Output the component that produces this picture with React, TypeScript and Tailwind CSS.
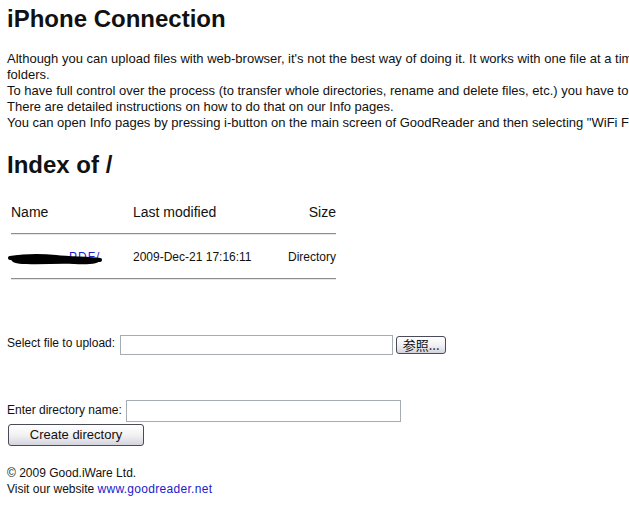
import React from "react";

export default function App() {
  return (
    <div className="w-[629px] h-[519px] overflow-hidden bg-white text-[#111] font-['Liberation_Sans',Arial,sans-serif]">
      <div className="w-[1000px] px-[7px]">
        <h1 className="mt-[5px] text-[24px] leading-[28px] font-bold">iPhone Connection</h1>
        <div className="mt-[18px] text-[13px] leading-[16px] whitespace-nowrap">
          <div>Although you can upload files with web-browser, it's not the best way of doing it. It works with one file at a time and you cannot upload whole</div>
          <div>folders.</div>
          <div>To have full control over the process (to transfer whole directories, rename and delete files, etc.) you have to use WebDAV.</div>
          <div>There are detailed instructions on how to do that on our Info pages.</div>
          <div>You can open Info pages by pressing i-button on the main screen of GoodReader and then selecting "WiFi File Transfer".</div>
        </div>
        <h2 className="mt-[20px] text-[24px] leading-[28px] font-bold">Index of /</h2>
        <div className="ml-[4px] w-[325px] mt-[25px]">
          <div className="flex text-[14px] leading-[16px]">
            <div className="w-[122px]">Name</div>
            <div className="flex-1">Last modified</div>
            <div>Size</div>
          </div>
          <div className="mt-[13px] border-t border-t-[#8e8e8e] border-b border-b-[#e6e6e6]"></div>
          <div className="flex text-[12px] leading-[16px] mt-[14px]">
            <div className="w-[122px] relative">
              <span className="text-[#2020cc] pl-[58px] tracking-[1px]">PDF/</span>
              <svg className="absolute left-[-3px] top-[1px]" width="95" height="16" viewBox="0 0 95 16">
                <path d="M3 9 C8 5, 16 6, 26 7 C36 8, 48 5, 60 8 C72 9, 84 7, 93 9 C92 14, 80 15, 66 14 C50 13, 34 15, 18 14 C8 14, 3 12, 3 9 Z" fill="#000" />
                <path d="M2 8 C14 6, 30 5, 48 7 C64 9, 80 8, 92 10" stroke="#000" strokeWidth="4" fill="none" strokeLinecap="round" />
              </svg>
            </div>
            <div className="flex-1">2009-Dec-21 17:16:11</div>
            <div>Directory</div>
          </div>
          <div className="mt-[13px] border-t border-t-[#8e8e8e] border-b border-b-[#e6e6e6]"></div>
        </div>
        <div className="mt-[55px] flex items-end text-[12px] leading-[16px]">
          <span className="mb-[4px]">Select file to upload:</span>
          <div className="ml-[5px] w-[273px] h-[20px] border border-[#a5acb2] bg-white"></div>
          <button className="ml-[3px] mb-[1px] w-[50px] h-[18px] border border-[#4a4a5a] rounded-[3px] bg-gradient-to-b from-white via-[#f2f2f4] to-[#d4d4de] text-[13px] leading-[14px] font-['Noto_Sans_CJK_JP',sans-serif] flex items-center justify-center">
            参照...
          </button>
        </div>
        <div className="mt-[45px] flex items-end text-[12px] leading-[16px]">
          <span className="mb-[4px]">Enter directory name:</span>
          <div className="ml-[4px] w-[275px] h-[22px] border border-[#a5acb2] bg-white"></div>
        </div>
        <button className="mt-[2px] ml-[1px] w-[136px] h-[22px] border border-[#4a4a5a] rounded-[3px] bg-gradient-to-b from-white via-[#f2f2f4] to-[#d4d4de] text-[13px] leading-[16px] text-[#111] flex items-center justify-center">
          Create directory
        </button>
        <div className="mt-[19px] text-[12px] leading-[16px]">
          <div>© 2009 Good.iWare Ltd.</div>
          <div>
            Visit our website <a className="text-[#2020cc] tracking-[0.3px]" href="#">www.goodreader.net</a>
          </div>
        </div>
      </div>
    </div>
  );
}
